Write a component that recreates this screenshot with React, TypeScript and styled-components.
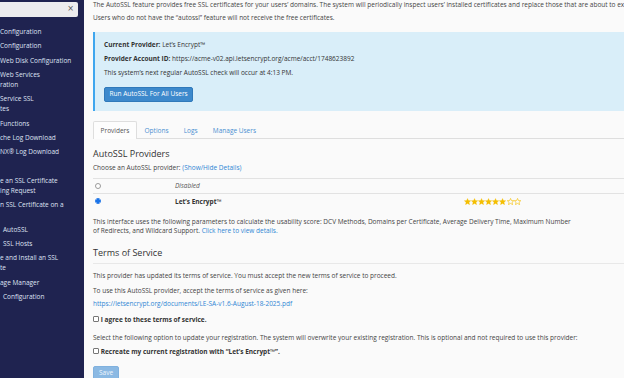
import styled, { createGlobalStyle } from "styled-components";

const GlobalStyle = createGlobalStyle`
  html, body {
    margin: 0;
    padding: 0;
    background: #fafafa;
  }
  body {
    font-family: "Open Sans", "DejaVu Sans", sans-serif;
    color: #333;
  }
  #root {
    width: 624px;
    height: 378px;
    overflow: hidden;
  }
`;

const Shell = styled.div`
  display: flex;
  width: 624px;
  height: 378px;
  overflow: hidden;
`;

/* ---------- sidebar ---------- */

const Sidebar = styled.nav`
  flex: 0 0 84px;
  background: #1f2350;
  display: flex;
  flex-direction: column;
  overflow: hidden;
`;

const SearchBox = styled.div`
  margin-top: 2px;
  width: 78px;
  height: 14.5px;
  box-sizing: border-box;
  background: #ececee;
  border-radius: 0 2px 2px 0;
  display: flex;
  align-items: center;
  justify-content: flex-end;
  padding-right: 4px;
`;

const ClearIcon = styled.span`
  color: #555;
  font-family: "DejaVu Sans", sans-serif;
  font-size: 8px;
  line-height: 1;
`;

const NavList = styled.ul`
  list-style: none;
  margin: 8.2px 0 0;
  padding: 0;
`;

const NavItem = styled.li<{ $indent?: number }>`
  padding: 2.18px 0 2.18px ${(p) => p.$indent ?? 0}px;
  font-size: 6.5px;
  line-height: 10px;
  color: #dfe2f2;
  white-space: nowrap;
  min-height: 10px;
`;

const NavLine = styled.div`
  height: 10px;
`;

/* ---------- main ---------- */

const Main = styled.main`
  flex: 1;
  min-width: 0;
  background: #fafafa;
  overflow: hidden;
  padding-left: 9px;
`;

const Content = styled.div`
  width: 640px;
`;

const Text = styled.p<{ $mt?: number; $wrap?: boolean }>`
  margin: ${(p) => p.$mt ?? 0}px 0 0;
  font-size: 6.5px;
  line-height: 9.2px;
  color: #444;
  white-space: ${(p) => (p.$wrap ? "normal" : "nowrap")};
  max-width: ${(p) => (p.$wrap ? "481px" : "none")};
`;

const Strong = styled.strong`
  font-weight: 700;
  color: #333;
`;

const Link = styled.a`
  color: #2f86d4;
  text-decoration: none;
`;

const InfoBox = styled.div`
  margin-top: 10.5px;
  background: #d9eef9;
  border-left: 2px solid #3fa6ee;
  padding: 7.5px 10px 9.5px 9px;
`;

const InfoLine = styled.p<{ $mt?: number }>`
  margin: ${(p) => p.$mt ?? 0}px 0 0;
  font-size: 6.5px;
  line-height: 9px;
  color: #333;
  white-space: nowrap;
`;

const Button = styled.button<{ $disabled?: boolean }>`
  display: block;
  height: 15px;
  padding: 0 4.5px;
  box-sizing: border-box;
  font-family: inherit;
  font-size: 6.5px;
  line-height: 1;
  border-radius: 2px;
  cursor: pointer;
  background: ${(p) => (p.$disabled ? "#8bb9e3" : "#3d89cc")};
  border: 1px solid ${(p) => (p.$disabled ? "#80b1de" : "#3079ba")};
  color: ${(p) => (p.$disabled ? "#eef5fc" : "#fff")};
`;

const RunButton = styled(Button)`
  margin-top: 10.2px;
`;

const SaveButton = styled(Button)`
  margin-top: 10.2px;
  width: 26px;
  padding: 0;
`;

const Tabs = styled.div`
  margin-top: 9.5px;
  display: flex;
  border-bottom: 1px solid #dedede;
`;

const Tab = styled.div<{ $active?: boolean }>`
  height: 18.6px;
  box-sizing: border-box;
  padding: 0 6.6px;
  display: flex;
  align-items: center;
  font-size: 6.5px;
  margin-bottom: -1px;
  border: 1px solid ${(p) => (p.$active ? "#dedede" : "transparent")};
  border-bottom: none;
  border-radius: 2px 2px 0 0;
  background: ${(p) => (p.$active ? "#fdfdfd" : "transparent")};
  color: ${(p) => (p.$active ? "#555" : "#4b8fd1")};
`;

const Heading = styled.h2<{ $mt: number; $rule?: boolean }>`
  margin: ${(p) => p.$mt}px 0 0;
  font-size: 9px;
  line-height: 12px;
  font-weight: 400;
  color: #333;
  padding-bottom: ${(p) => (p.$rule ? "3.7px" : "0")};
  border-bottom: ${(p) => (p.$rule ? "1px solid #e8e8e8" : "none")};
`;

const ProviderTable = styled.div`
  margin-top: 5.1px;
  border-top: 1px solid #e2e2e2;
`;

const ProviderRow = styled.div<{ $h: number; $rule?: boolean }>`
  display: grid;
  grid-template-columns: 82px 289px 1fr;
  align-items: center;
  height: ${(p) => p.$h}px;
  border-bottom: ${(p) => (p.$rule ? "1px solid #e2e2e2" : "none")};
  font-size: 6.5px;
  color: #333;
`;

const RadioCell = styled.div`
  padding-left: 2px;
  display: flex;
  align-items: center;
`;

const Radio = styled.input.attrs({ type: "radio" })`
  appearance: none;
  margin: 0;
  width: 6px;
  height: 6px;
  box-sizing: border-box;
  border-radius: 50%;
  border: 0.8px solid #9a9a9a;
  background: #fff;

  &:checked {
    border-color: #1a73e8;
    background: radial-gradient(circle, #1a73e8 0 1.6px, #fff 1.9px);
  }
`;

const NameCell = styled.div<{ $italic?: boolean; $bold?: boolean }>`
  font-style: ${(p) => (p.$italic ? "italic" : "normal")};
  font-weight: ${(p) => (p.$bold ? 700 : 400)};
  color: ${(p) => (p.$italic ? "#555" : "#333")};
`;

const Stars = styled.div`
  display: flex;
  align-items: center;
`;

const CheckRow = styled.label<{ $mt: number }>`
  margin-top: ${(p) => p.$mt}px;
  display: flex;
  align-items: center;
  gap: 1.7px;
  font-size: 6.5px;
  line-height: 9px;
  font-weight: 700;
  color: #333;
  white-space: nowrap;
`;

const Checkbox = styled.input.attrs({ type: "checkbox" })`
  appearance: none;
  margin: 0;
  width: 6px;
  height: 6px;
  box-sizing: border-box;
  border: 0.8px solid #767676;
  border-radius: 1px;
  background: #fff;
`;

function Star({ filled }: { filled: boolean }) {
  return (
    <svg width="7.1" height="7.1" viewBox="0 0 10 10">
      <polygon
        points="5,0.6 6.3,3.6 9.6,3.8 7.1,6 7.9,9.4 5,7.6 2.1,9.4 2.9,6 0.4,3.8 3.7,3.6"
        fill={filled ? "#f5bf00" : "none"}
        stroke="#f5bf00"
        strokeWidth={filled ? 0.4 : 0.9}
        strokeLinejoin="round"
      />
    </svg>
  );
}

const navItems: { lines: string[]; indent?: number }[] = [
  { lines: ["Configuration"] },
  { lines: ["Configuration"] },
  { lines: ["Web Disk Configuration"] },
  { lines: ["Web Services", "ration"] },
  { lines: [" Service SSL", "tes"] },
  { lines: ["Functions"] },
  { lines: ["che Log Download"] },
  { lines: ["NX® Log Download"] },
  { lines: [""] },
  { lines: ["e an SSL Certificate", "ing Request"] },
  { lines: ["n SSL Certificate on a", ""] },
  { lines: ["AutoSSL"], indent: 3 },
  { lines: ["SSL Hosts"], indent: 3 },
  { lines: ["e and Install an SSL", "te"] },
  { lines: ["age Manager"] },
  { lines: ["Configuration"], indent: 3 },
];

export default function App() {
  return (
    <>
      <GlobalStyle />
      <Shell>
        <Sidebar>
          <SearchBox>
            <ClearIcon>×</ClearIcon>
          </SearchBox>
          <NavList>
            {navItems.map((item, i) => (
              <NavItem key={i} $indent={item.indent}>
                {item.lines.map((l, j) => (
                  <NavLine key={j}>{l}</NavLine>
                ))}
              </NavItem>
            ))}
          </NavList>
        </Sidebar>

        <Main>
          <Content>
            <Text>
              The AutoSSL feature provides free SSL certificates for your users’ domains. The
              system will periodically inspect users’ installed certificates and replace those
              that are about to expire.
            </Text>
            <Text $mt={3.3}>
              Users who do not have the “autossl” feature will not receive the free certificates.
            </Text>

            <InfoBox>
              <InfoLine>
                <Strong>Current Provider:</Strong> Let’s Encrypt™
              </InfoLine>
              <InfoLine $mt={5}>
                <Strong>Provider Account ID:</Strong>{" "}
                https://acme-v02.api.letsencrypt.org/acme/acct/1748623892
              </InfoLine>
              <InfoLine $mt={5}>
                This system’s next regular AutoSSL check will occur at 4:13 PM.
              </InfoLine>
              <RunButton>Run AutoSSL For All Users</RunButton>
            </InfoBox>

            <Tabs>
              <Tab $active>Providers</Tab>
              <Tab>Options</Tab>
              <Tab>Logs</Tab>
              <Tab>Manage Users</Tab>
            </Tabs>

            <Heading $mt={8.7}>AutoSSL Providers</Heading>
            <Text $mt={3.1}>
              Choose an AutoSSL provider: <Link href="#">(Show/Hide Details)</Link>
            </Text>

            <ProviderTable>
              <ProviderRow $h={14} $rule>
                <RadioCell>
                  <Radio name="provider" />
                </RadioCell>
                <NameCell $italic>Disabled</NameCell>
                <div />
              </ProviderRow>
              <ProviderRow $h={15.4}>
                <RadioCell>
                  <Radio name="provider" defaultChecked />
                </RadioCell>
                <NameCell $bold>Let’s Encrypt™</NameCell>
                <Stars>
                  {[0, 1, 2, 3, 4, 5, 6, 7].map((i) => (
                    <Star key={i} filled={i < 6} />
                  ))}
                </Stars>
              </ProviderRow>
            </ProviderTable>

            <Text $mt={7.9} $wrap>
              This interface uses the following parameters to calculate the usability score: DCV
              Methods, Domains per Certificate, Average Delivery Time, Maximum Number of Redirects,
              and Wildcard Support. <Link href="#">Click here to view details.</Link>
            </Text>

            <Heading $mt={11.8} $rule>
              Terms of Service
            </Heading>
            <Text $mt={7.7}>
              This provider has updated its terms of service. You must accept the new terms of
              service to proceed.
            </Text>
            <Text $mt={5.2}>
              To use this AutoSSL provider, accept the terms of service as given here:
            </Text>
            <Text $mt={4.4}>
              <Link href="#">https://letsencrypt.org/documents/LE-SA-v1.6-August-18-2025.pdf</Link>
            </Text>
            <CheckRow $mt={6}>
              <Checkbox />I agree to these terms of service.
            </CheckRow>
            <Text $mt={9.2}>
              Select the following option to update your registration. The system will overwrite
              your existing registration. This is optional and not required to use this provider:
            </Text>
            <CheckRow $mt={4.5}>
              <Checkbox />
              Recreate my current registration with “Let’s Encrypt™”.
            </CheckRow>

            <SaveButton $disabled disabled>
              Save
            </SaveButton>
          </Content>
        </Main>
      </Shell>
    </>
  );
}
